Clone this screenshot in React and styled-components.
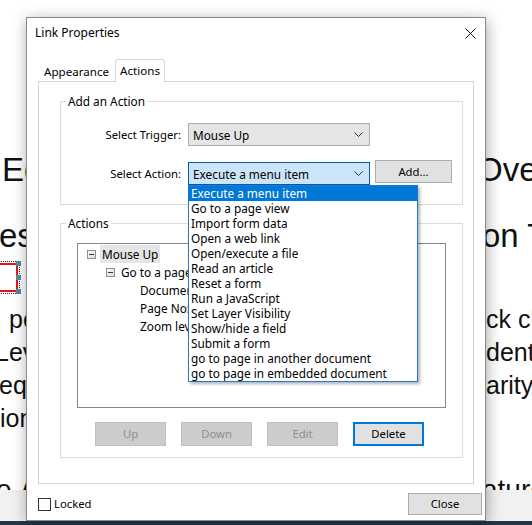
import React from "react";
import styled, { createGlobalStyle } from "styled-components";

const GlobalStyle = createGlobalStyle`
  html, body {
    margin: 0;
    padding: 0;
    background: #fff;
    overflow: hidden;
  }
`;

const bgTop = [
    {size: 33, lh: 40, gap: 0, left: "Edit", indent: 2, split: 477, right: "Overview"},
    {size: 33, lh: 40, gap: 26, left: "es", indent: -1, split: 482, right: "on Tools"},
];

const bgBody = [
    {size: 25, lh: 33, gap: 11, left: "po", indent: 9, split: 486, right: "ck changes"},
    {size: 25, lh: 33, gap: 0, left: "Lev", indent: -5, split: 486, right: "dent"},
    {size: 25, lh: 33, gap: 0, left: "equ", indent: -1, split: 486, right: "arity"},
    {size: 25, lh: 33, gap: 0, left: "ion", indent: 0, split: 532, right: ""},
];

const actionItems = [
    "Execute a menu item",
    "Go to a page view",
    "Import form data",
    "Open a web link",
    "Open/execute a file",
    "Read an article",
    "Reset a form",
    "Run a JavaScript",
    "Set Layer Visibility",
    "Show/hide a field",
    "Submit a form",
    "go to page in another document",
    "go to page in embedded document",
];

const treeRows = [
    {level: 0, text: "Mouse Up", expander: true, selected: true},
    {level: 1, text: "Go to a page view", expander: true},
    {level: 2, text: "Document: Current Document"},
    {level: 2, text: "Page No: 1"},
    {level: 2, text: "Zoom level: Inherit Zoom"},
];

const Chevron = () => (
    <svg width="9" height="5" viewBox="0 0 9 5">
        <path d="M0.5 0.5 L4.5 4.5 L8.5 0.5" fill="none" stroke="#333" strokeWidth="1"/>
    </svg>
);

const Expander = () => (
    <svg width="9" height="9" viewBox="0 0 9 9">
        <defs>
            <linearGradient id="exp" x1="0" y1="0" x2="1" y2="1">
                <stop offset="0" stopColor="#ffffff"/>
                <stop offset="1" stopColor="#d8d8d8"/>
            </linearGradient>
        </defs>
        <rect x="0.5" y="0.5" width="8" height="8" fill="url(#exp)" stroke="#8e8f8f"/>
        <path d="M2 4.5 H7" stroke="#1e395b" strokeWidth="1"/>
    </svg>
);

const App = () => {
    return (
        <>
            <GlobalStyle/>
            <Screen>
                <Page>
                    {bgTop.map((r, i) => (
                        <TextRow key={i} $size={r.size} $lh={r.lh} $gap={r.gap}>
                            <LeftText $split={r.split} $indent={r.indent}>{r.left}</LeftText>
                            <span>{r.right}</span>
                        </TextRow>
                    ))}
                    <Marker>
                        <Handle $pos="top"/>
                        <Handle $pos="mid"/>
                        <Handle $pos="bottom"/>
                    </Marker>
                    {bgBody.map((r, i) => (
                        <TextRow key={i} $size={r.size} $lh={r.lh} $gap={r.gap}>
                            <LeftText $split={r.split} $indent={r.indent}>{r.left}</LeftText>
                            <span>{r.right}</span>
                        </TextRow>
                    ))}
                    <TextRow $size={28} $lh={34} $gap={38}>
                        <LeftText $split={482} $indent={-4}>e <b>A</b>ctions</LeftText>
                        <span>atures</span>
                    </TextRow>
                </Page>
                <ToolBand/>
                <TaskBar/>

                <Dialog>
                    <TitleBar>
                        <span>Link Properties</span>
                        <svg width="11" height="11" viewBox="0 0 11 11">
                            <path d="M0.5 0.5 L10.5 10.5 M10.5 0.5 L0.5 10.5" stroke="#111" strokeWidth="1"/>
                        </svg>
                    </TitleBar>
                    <Body>
                        <TabStrip>
                            <Tab>Appearance</Tab>
                            <Tab $active>Actions</Tab>
                        </TabStrip>
                        <Panel>
                            <Group $pad="14px 0 19px 0">
                                <Legend>Add an Action</Legend>
                                <FieldRow>
                                    <FieldLabel>Select Trigger:</FieldLabel>
                                    <Combo>
                                        <span>Mouse Up</span>
                                        <Chevron/>
                                    </Combo>
                                </FieldRow>
                                <FieldRow>
                                    <FieldLabel>Select Action:</FieldLabel>
                                    <Combo $focused>
                                        <span>Execute a menu item</span>
                                        <Chevron/>
                                        <DropList>
                                            {actionItems.map((item, i) => (
                                                <DropItem key={item} $selected={i === 0}>{item}</DropItem>
                                            ))}
                                        </DropList>
                                    </Combo>
                                    <AddButton>Add...</AddButton>
                                </FieldRow>
                            </Group>
                            <Group $pad="0 0 11px 0">
                                <Legend>Actions</Legend>
                                <Tree>
                                    {treeRows.map((row, i) => (
                                        <TreeRow key={i} $level={row.level}>
                                            <ExpanderSlot>{row.expander && <Expander/>}</ExpanderSlot>
                                            <TreeText $selected={row.selected}>{row.text}</TreeText>
                                        </TreeRow>
                                    ))}
                                </Tree>
                                <ButtonRow>
                                    <Button disabled>Up</Button>
                                    <Button disabled>Down</Button>
                                    <Button disabled>Edit</Button>
                                    <Button $default>Delete</Button>
                                </ButtonRow>
                            </Group>
                        </Panel>
                    </Body>
                    <Footer>
                        <CheckLabel>
                            <CheckBox/>
                            Locked
                        </CheckLabel>
                        <Button $w={74} $h={22}>Close</Button>
                    </Footer>
                </Dialog>
            </Screen>
        </>
    );
};

const Screen = styled.div`
  position: relative;
  width: 532px;
  height: 525px;
  overflow: hidden;
  display: flex;
  flex-direction: column;
`;

const Page = styled.div`
  height: 490px;
  flex: none;
  box-sizing: border-box;
  padding-top: 150px;
  overflow: hidden;
  background: #fff;
  font-family: "Liberation Sans", Arial, sans-serif;
  color: #111;
`;

const TextRow = styled.div`
  display: flex;
  white-space: nowrap;
  font-size: ${p => p.$size}px;
  line-height: ${p => p.$lh}px;
  margin-top: ${p => p.$gap}px;
`;

const LeftText = styled.span`
  flex: none;
  display: block;
  width: ${p => p.$split}px;
  overflow: hidden;
  text-indent: ${p => p.$indent}px;
`;

const Marker = styled.div`
  position: relative;
  margin: 7px 0 0 -10px;
  width: 28px;
  height: 29px;
  box-sizing: border-box;
  border: 2px solid #e8141b;
  outline: 1px dotted #222;
  outline-offset: 1px;
`;

const Handle = styled.span`
  position: absolute;
  right: -5px;
  width: 5px;
  height: 5px;
  background: #4f8da0;
  top: ${p => p.$pos === "top" ? "-4px" : p.$pos === "mid" ? "10px" : "auto"};
  bottom: ${p => p.$pos === "bottom" ? "-4px" : "auto"};
`;

const ToolBand = styled.div`
  height: 31px;
  flex: none;
  background: #f1f1f1;
`;

const TaskBar = styled.div`
  flex: 1;
  background: #243748;
`;

const Dialog = styled.div`
  position: absolute;
  left: 26px;
  top: 17px;
  width: 460px;
  height: 504px;
  box-sizing: border-box;
  display: flex;
  flex-direction: column;
  background: #fff;
  border: 1px solid #8a8a8a;
  box-shadow: 1px 3px 14px rgba(0, 0, 0, 0.35);
  font-family: "Noto Sans", "Liberation Sans", sans-serif;
  font-size: 11.3px;
  line-height: 16px;
  color: #000;
`;

const TitleBar = styled.div`
  height: 30px;
  flex: none;
  display: flex;
  align-items: center;
  justify-content: space-between;
  padding: 0 9px 0 8px;
  font-size: 12px;
`;

const Body = styled.div`
  padding: 11px 11px 0 11px;
`;

const TabStrip = styled.div`
  position: relative;
  z-index: 1;
  display: flex;
  align-items: flex-end;
  height: 22px;
`;

const Tab = styled.div`
  height: ${p => p.$active ? 22 : 19}px;
  line-height: ${p => p.$active ? 21 : 19}px;
  padding: 0 ${p => p.$active ? 4 : 5}px;
  margin-bottom: ${p => p.$active ? -1 : 0}px;
  border: 1px solid ${p => p.$active ? "#d6d9de" : "transparent"};
  border-bottom: none;
  border-radius: 3px 3px 0 0;
  background: #fff;
  font-size: 11.6px;
`;

const Panel = styled.div`
  border: 1px solid #d0d4da;
  padding: 11px 10px 25px 21px;
`;

const Group = styled.fieldset`
  margin: 0;
  min-width: 0;
  padding: ${p => p.$pad};
  border: 1px solid #dcdcdc;

  & + & {
    margin-top: 10px;
  }
`;

const Legend = styled.legend`
  margin-left: 5px;
  padding: 0 2px;
  line-height: 16px;
  font-size: 11.8px;
`;

const FieldRow = styled.div`
  display: flex;
  align-items: center;

  & + & {
    margin-top: 16px;
  }
`;

const FieldLabel = styled.label`
  flex: none;
  width: 120px;
  margin-right: 7px;
  text-align: right;
`;

const Combo = styled.div`
  position: relative;
  flex: none;
  width: 182px;
  height: 23px;
  box-sizing: border-box;
  display: flex;
  align-items: center;
  justify-content: space-between;
  padding: 0 6px 0 4px;
  border: 1px solid ${p => p.$focused ? "#0a5da8" : "#adadad"};
  background: ${p => p.$focused ? "#cce4f7" : "#e5e5e5"};
  font-size: 11.8px;
`;

const DropList = styled.div`
  position: absolute;
  z-index: 5;
  left: -1px;
  top: 22px;
  width: 230px;
  box-sizing: border-box;
  border: 1px solid #1c7ad4;
  background: #fff;
  box-shadow: 2px 2px 3px rgba(0, 0, 0, 0.3);
`;

const DropItem = styled.div`
  height: 15px;
  line-height: 15px;
  padding-left: 2px;
  white-space: nowrap;
  background: ${p => p.$selected ? "#0078d7" : "transparent"};
  color: ${p => p.$selected ? "#fff" : "#000"};
`;

const AddButton = styled.button`
  align-self: flex-start;
  margin: -2px 0 0 5px;
  width: 77px;
  height: 23px;
  padding: 0;
  font: inherit;
  color: #000;
  background: #e1e1e1;
  border: 1px solid #adadad;
`;

const Tree = styled.div`
  margin: 12px 16px 0 16px;
  height: 165px;
  box-sizing: border-box;
  padding-top: 1px;
  border: 1px solid #828790;
  background: #fff;
  font-size: 11.8px;
`;

const TreeRow = styled.div`
  display: flex;
  align-items: center;
  height: 18px;
  padding-left: ${p => 9 + p.$level * 19}px;
  white-space: nowrap;
  overflow: hidden;
`;

const ExpanderSlot = styled.span`
  flex: none;
  display: flex;
  width: 9px;
  height: 9px;
  margin-right: 4px;
`;

const TreeText = styled.span`
  line-height: 18px;
  padding: 0 2px;
  background: ${p => p.$selected ? "#e5e5e5" : "transparent"};
`;

const ButtonRow = styled.div`
  display: flex;
  gap: 15px;
  margin-top: 14px;
  padding-left: 34px;
`;

const Button = styled.button`
  width: ${p => p.$w || 71}px;
  height: ${p => p.$h || 24}px;
  box-sizing: border-box;
  padding: 0;
  font: inherit;
  color: #000;
  background: #e1e1e1;
  border: ${p => p.$default ? "2px solid #0078d7" : "1px solid #adadad"};

  &:disabled {
    color: #8f8f8f;
    background: #cccccc;
    border-color: #bfbfbf;
  }
`;

const Footer = styled.div`
  display: flex;
  align-items: center;
  justify-content: space-between;
  padding: 9px 3px 0 11px;
`;

const CheckLabel = styled.label`
  display: flex;
  align-items: center;
  gap: 3px;
`;

const CheckBox = styled.span`
  width: 13px;
  height: 13px;
  box-sizing: border-box;
  border: 1px solid #333;
  background: #fff;
`;

export default App;
